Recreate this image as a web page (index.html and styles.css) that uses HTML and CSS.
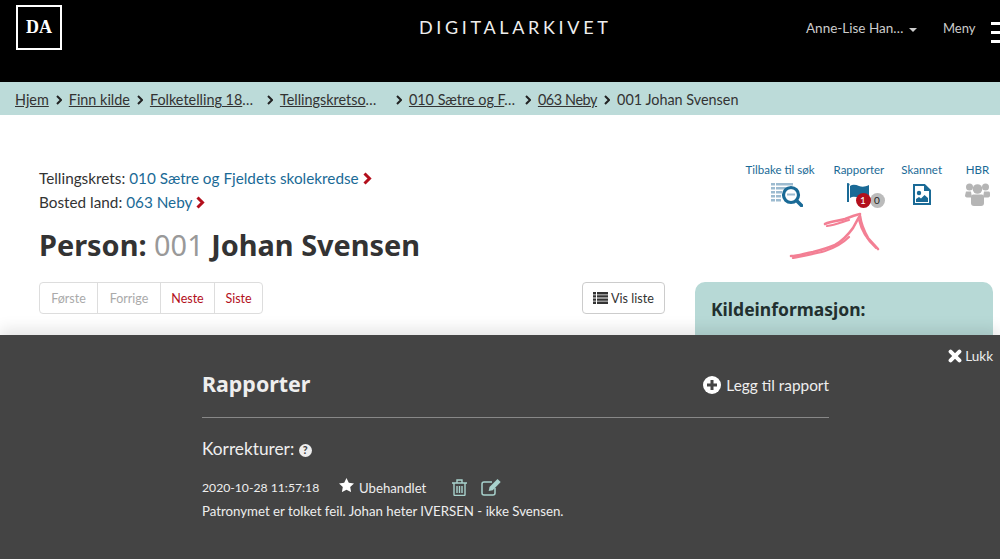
FILE: index.html
```html
<!DOCTYPE html>
<html>
<head>
    <meta charset="utf-8" />
    <title>Digitalarkivet</title>
    <link rel="stylesheet" href="styles.css">
</head>
<body>
    <header class="topbar">
        <div class="logo">DA</div>
        <div class="site-name">DIGITALARKIVET</div>
        <div class="user">Anne-Lise Han… <span class="caret"></span></div>
        <div class="menu">Meny</div>
        <div class="burger"><span></span><span></span><span></span></div>
    </header>

    <nav class="crumbs">
        <a href="#">Hjem</a><svg class="sep" width="6" height="10" viewBox="0 0 6 10"><path d="M1 1l4 4-4 4" fill="none" stroke="#222" stroke-width="2"/></svg>
        <a href="#">Finn kilde</a><svg class="sep" width="6" height="10" viewBox="0 0 6 10"><path d="M1 1l4 4-4 4" fill="none" stroke="#222" stroke-width="2"/></svg>
        <span class="cut cut-1"><a href="#">Folketelling 18</a>…</span><svg class="sep" width="6" height="10" viewBox="0 0 6 10"><path d="M1 1l4 4-4 4" fill="none" stroke="#222" stroke-width="2"/></svg>
        <span class="cut cut-2"><a href="#">Tellingskretso</a>…</span><svg class="sep" width="6" height="10" viewBox="0 0 6 10"><path d="M1 1l4 4-4 4" fill="none" stroke="#222" stroke-width="2"/></svg>
        <span class="cut cut-3"><a href="#">010 Sætre og F</a>…</span><svg class="sep" width="6" height="10" viewBox="0 0 6 10"><path d="M1 1l4 4-4 4" fill="none" stroke="#222" stroke-width="2"/></svg>
        <a class="tight" href="#">063 Neby</a><svg class="sep" width="6" height="10" viewBox="0 0 6 10"><path d="M1 1l4 4-4 4" fill="none" stroke="#222" stroke-width="2"/></svg>
        <span>001 Johan Svensen</span>
    </nav>

    <main class="content">
        <section class="left">
            <p class="line">Tellingskrets: <a href="#">010 Sætre og Fjeldets skolekredse</a> <svg width="9" height="13" viewBox="0 0 9 13"><path d="M1.500 1.500l5 5-5 5" fill="none" stroke="#b30f1c" stroke-width="3"/></svg></p>
            <p class="line">Bosted land: <a href="#">063 Neby</a> <svg width="9" height="13" viewBox="0 0 9 13"><path d="M1.500 1.500l5 5-5 5" fill="none" stroke="#b30f1c" stroke-width="3"/></svg></p>
            <h1>Person: <span class="num">001</span> Johan Svensen</h1>
            <div class="pager-row">
                <div class="pager">
                    <span class="off first">Første</span>
                    <span class="off prev">Forrige</span>
                    <span class="next">Neste</span>
                    <span class="last">Siste</span>
                </div>
                <button class="list-btn">
                    <svg width="15" height="12" viewBox="0 0 15 12"><path fill="#333" d="M0 0h3v2.400H0zM4 0h11v2.400H4zM0 3.200h3v2.400H0zM4 3.200h11v2.400H4zM0 6.400h3v2.400H0zM4 6.400h11v2.400H4zM0 9.600h3V12H0zM4 9.600h11V12H4z"/></svg>
                    Vis liste
                </button>
            </div>
        </section>
        <aside class="right">
            <div class="tools">
                <a class="tool tool-search" href="#">
                    <span>Tilbake til søk</span>
                    <svg width="32" height="24" viewBox="0 0 32 24"><path fill="#9dbbd0" d="M0 0h4v2.500H0zM5 0h17v2.500H5zM0 4h4v2.500H0zM5 4h17v2.500H5zM0 8h4v2.500H0zM5 8h6v2.500H5zM0 12h4v2.500H0zM5 12h5v2.500H5zM0 16h4v2.500H0zM5 16h5v2.500H5z"/><circle cx="20" cy="12" r="7.500" fill="#fff" fill-opacity=".6" stroke="#1a6a96" stroke-width="3.200"/><path fill="#9dbbd0" d="M16 10.500h8v2h-8z"/><path d="M25.500 17.500l5 5" stroke="#1a6a96" stroke-width="3.600" stroke-linecap="round"/></svg>
                </a>
                <a class="tool tool-flag" href="#">
                    <span>Rapporter</span>
                    <svg width="23" height="19" viewBox="0 0 23 19"><path fill="#1a6a96" d="M0 2h2v17H0z"/><circle cx="1" cy="1.500" r="1.500" fill="#1a6a96"/><path fill="#1a6a96" d="M3 3c3-2 6-1 9 0s6 1 10-1v12c-4 2-7 2-10 1s-6-2-9 0z"/></svg>
                    <b class="badge red">1</b><b class="badge grey">0</b>
                </a>
                <a class="tool tool-scan" href="#">
                    <span>Skannet</span>
                    <svg width="18" height="21" viewBox="0 0 18 21"><path fill="none" stroke="#1a6a96" stroke-width="2" d="M1 1h10.500L17 6.500V20H1z"/><path fill="#1a6a96" d="M11 1l6 6h-6z"/><circle cx="6" cy="9" r="2.200" fill="#1a6a96"/><path fill="#1a6a96" d="M3 18v-3l3-2 2 1.500 3.500-3.500L15 14v4z"/></svg>
                </a>
                <a class="tool tool-hbr" href="#">
                    <span>HBR</span>
                    <svg width="25" height="23" viewBox="0 0 25 23"><g fill="#b5b5b5"><circle cx="4.500" cy="4" r="3.500"/><circle cx="20.500" cy="4" r="3.500"/><circle cx="12.500" cy="6" r="4.800"/><path d="M1 8.500h5l1 6H3q-3 0-3-2zM19 8.500h5q1 0 1 2v2q0 2-3 2h-4z"/><path d="M6 14q0-2.500 2-2.500h9q2 0 2 2.500v6q0 3-3 3H9q-3 0-3-3z"/></g></svg>
                </a>
            </div>
            <svg class="arrow" width="100" height="48" viewBox="0 0 100 48"><g fill="none" stroke="#ef4f6c" stroke-linecap="round" stroke-linejoin="round" opacity=".72"><path stroke-width="2.600" d="M3 45c8 0 14-3 22-4 8-2 15-4 22-7 7-4 13-10 18-17l6-11"/><path stroke-width="2.200" d="M5 47c10-2 22-4 32-7 9-3 17-7 24-14"/><path stroke-width="2.600" d="M37 13c7-3 14-3 20-5 5-2 10-4 15-5"/><path stroke-width="2.200" d="M39 15c8-1 15-4 22-6"/><path stroke-width="2.600" d="M72 5c1 8 4 15 8 22l10 11"/><path stroke-width="2" d="M71 9c2 9 7 19 17 28"/></g></svg>
            <div class="source-box">
                <h2>Kildeinformasjon:</h2>
            </div>
        </aside>
    </main>

    <section class="panel">
        <a class="close" href="#"><svg width="14" height="14" viewBox="0 0 14 14"><path d="M2.600 2.600l8.800 8.800M11.400 2.600l-8.800 8.800" stroke="#fff" stroke-width="4" stroke-linecap="round"/></svg>Lukk</a>
        <div class="panel-body">
            <div class="panel-head">
                <h2>Rapporter</h2>
                <a class="add" href="#"><svg width="18" height="18" viewBox="0 0 18 18"><circle cx="9" cy="9" r="9" fill="#fff"/><path d="M9 4v10M4 9h10" stroke="#444" stroke-width="3"/></svg>Legg til rapport</a>
            </div>
            <h3>Korrekturer: <span class="help">?</span></h3>
            <div class="report">
                <span class="date">2020-10-28 11:57:18</span>
                <span class="state"><svg width="15" height="14" viewBox="0 0 15 14"><path fill="#fff" d="M7.500 0l2.300 4.700 5.200.7-3.800 3.600.9 5.100-4.600-2.400-4.600 2.400.9-5.100L0 5.400l5.200-.7z"/></svg>Ubehandlet</span>
                <svg class="act" width="15" height="17" viewBox="0 0 15 17"><g fill="none" stroke="#a8d2cd" stroke-width="1.400"><path d="M0 4h15M5 4V1h5v3M2 4v11.500q0 1 1 1h9q1 0 1-1V4M5 7v7M7.500 7v7M10 7v7"/></g></svg>
                <svg class="act" width="20" height="17" viewBox="0 0 20 17"><g fill="none" stroke="#a8d2cd" stroke-width="1.500"><path d="M14 9v5q0 2-2 2H3q-2 0-2-2V5q0-2 2-2h8"/></g><path fill="#a8d2cd" d="M16.500 0l3.200 3-8 8.200-4 .8.800-4z"/></svg>
            </div>
            <p class="note">Patronymet er tolket feil. Johan heter IVERSEN - ikke Svensen.</p>
        </div>
    </section>
</body>
</html>
```

FILE: styles.css
```css
* {
    box-sizing: border-box;
}
html, body {
    height: 559px;
    overflow: hidden;
}
body {
    position: relative;
    margin: 0;
    font-family: "Lato", "Noto Sans", sans-serif;
    font-size: 15px;
    color: #333;
    background: white;
}
a {
    color: inherit;
}

.topbar {
    display: flex;
    align-items: flex-start;
    height: 82px;
    padding: 5px 0 0 16px;
    background: black;
    color: #ccc;
}
.logo {
    display: flex;
    align-items: center;
    justify-content: center;
    width: 46px;
    height: 45px;
    border: 2px solid white;
    color: white;
    font-family: "Liberation Serif", serif;
    font-weight: bold;
    font-size: 18px;
}
.site-name {
    margin: 11px 0 0 357px;
    width: 191px;
    font-size: 18px;
    letter-spacing: 3.650px;
    white-space: nowrap;
    color: #eee;
}
.user {
    margin: 15px 0 0 196px;
    width: 137px;
    font-size: 13.500px;
    white-space: nowrap;
}
.caret {
    display: inline-block;
    margin-left: 2px;
    border: 4px solid transparent;
    border-top-color: #ccc;
    border-bottom: 0;
    vertical-align: middle;
}
.menu {
    margin-top: 15px;
    width: 47px;
    font-size: 13px;
}
.burger {
    display: flex;
    flex-direction: column;
    gap: 6px;
    flex: 1;
    margin-top: 17px;
    margin-left: 1px;
}
.burger span {
    height: 3px;
    background: white;
}

.crumbs {
    display: flex;
    align-items: center;
    height: 33px;
    padding: 2px 0 0 15px;
    background: #bcdbd9;
    font-size: 14.400px;
    white-space: nowrap;
}
.sep {
    margin: 0 7px;
}
.tight {
    letter-spacing: -0.4px;
}
.cut-1 {
    width: 110px;
}
.cut-2 {
    width: 109px;
}
.cut-3 {
    width: 109px;
}

.content {
    display: flex;
    justify-content: space-between;
    padding: 0 7px 0 39px;
}
.left {
    width: 626px;
    padding-top: 51px;
}
.line {
    margin: 0;
    line-height: 24px;
    font-size: 15.300px;
}
.line a {
    color: #1a6a96;
    text-decoration: none;
}
.line svg {
    vertical-align: -1px;
}
h1 {
    margin: 13px 0 19px;
    font-family: "Noto Sans", sans-serif;
    font-size: 28.900px;
    line-height: 36px;
    font-weight: 700;
}
.num {
    color: #999;
    font-weight: 400;
}
.pager-row {
    display: flex;
    justify-content: space-between;
}
.pager {
    display: flex;
    height: 32px;
    border: 1px solid #ddd;
    border-radius: 4px;
    font-size: 12.500px;
    color: #b30f1c;
}
.pager span {
    display: flex;
    align-items: center;
    justify-content: center;
    border-left: 1px solid #ddd;
}
.pager .first {
    width: 57px;
    border-left: 0;
}
.pager .prev {
    width: 63px;
}
.pager .next {
    width: 54px;
}
.pager .last {
    width: 48px;
}
.pager .off {
    color: #aaa;
}
.list-btn {
    display: flex;
    align-items: center;
    gap: 3px;
    width: 83px;
    height: 32px;
    padding: 0 0 0 10px;
    border: 1px solid #ccc;
    border-radius: 4px;
    background: white;
    color: #333;
    font: inherit;
    font-size: 12.600px;
}

.right {
    position: relative;
    width: 298px;
}
.tools {
    display: flex;
    position: absolute;
    top: 48px;
    right: 3px;
    font-size: 11.500px;
    color: #1a6a96;
    white-space: nowrap;
}
.tool {
    position: relative;
    display: flex;
    flex-direction: column;
    align-items: center;
    gap: 7px;
    text-decoration: none;
}
.tool-search {
    margin-right: 19px;
}
.tool-search svg {
    margin-left: 14px;
}
.tool-flag {
    margin-right: 17px;
}
.tool-scan {
    margin-right: 23px;
}
.tool-scan svg {
    margin-top: 1px;
}
.badge {
    position: absolute;
    top: 30px;
    display: block;
    width: 15px;
    height: 15px;
    border-radius: 50%;
    text-align: center;
    font-size: 10px;
    line-height: 15px;
    font-weight: 400;
}
.badge.red {
    left: 22px;
    background: #b30f1c;
    color: white;
    z-index: 1;
}
.badge.grey {
    left: 36px;
    background: #bbb;
    color: #222;
}
.arrow {
    position: absolute;
    top: 96px;
    left: 93px;
}
.source-box {
    margin-top: 167px;
    height: 80px;
    padding: 15px 16px;
    border-radius: 10px 10px 0 0;
    background: #b7d9d6;
}
.source-box h2 {
    margin: 0;
    font-family: "Noto Sans", sans-serif;
    font-size: 17.500px;
    font-weight: 700;
    color: #22302f;
}

.panel {
    position: absolute;
    left: 0;
    right: 0;
    bottom: 0;
    height: 224px;
    background: #444;
    color: #eee;
    box-shadow: 0 -6px 14px rgba(0,0,0,0.1);
}
.close {
    position: absolute;
    top: 13px;
    right: 7px;
    display: flex;
    align-items: center;
    gap: 3px;
    font-size: 13.500px;
    text-decoration: none;
}
.panel-body {
    width: 627px;
    margin-left: 202px;
}
.panel-head {
    display: flex;
    justify-content: space-between;
    align-items: center;
    height: 83px;
    padding-top: 15px;
    border-bottom: 1px solid #888;
}
.panel-head h2 {
    margin: 0;
    font-family: "Noto Sans", sans-serif;
    font-size: 21.400px;
    font-weight: 700;
}
.add {
    display: flex;
    align-items: center;
    gap: 5px;
    margin-top: 2px;
    font-size: 15.400px;
    text-decoration: none;
}
h3 {
    margin: 21px 0 0;
    font-size: 17.300px;
    font-weight: 400;
    line-height: 20px;
}
.help {
    display: inline-block;
    width: 13px;
    height: 13px;
    border-radius: 50%;
    background: #eee;
    color: #444;
    font-size: 10.500px;
    line-height: 13px;
    font-weight: 900;
    text-align: center;
    vertical-align: 1px;
}
.report {
    display: flex;
    align-items: center;
    margin-top: 20px;
    font-size: 12.200px;
}
.date {
    width: 137px;
}
.state {
    display: flex;
    align-items: center;
    gap: 5px;
    width: 113px;
    font-size: 13.200px;
}
.state svg {
    margin-top: -5px;
}
.act {
    margin-right: 14px;
}
.note {
    margin: 7px 0 0;
    font-size: 13.250px;
}
```
